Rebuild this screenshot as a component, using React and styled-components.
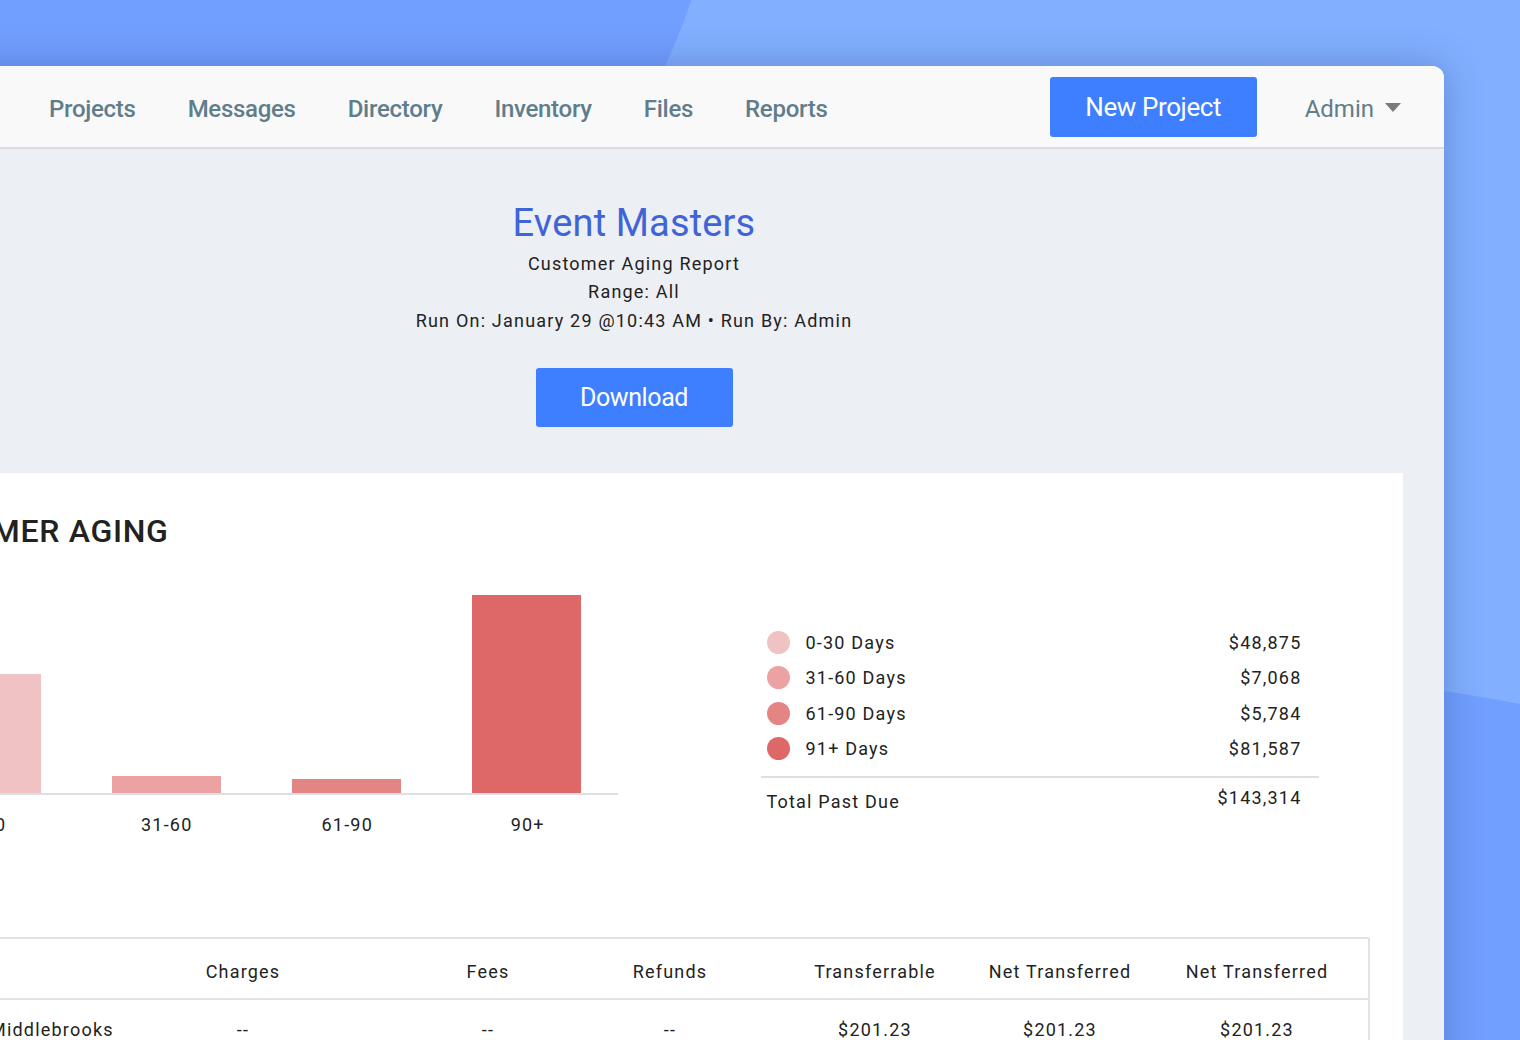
import React from "react";
import styled, { createGlobalStyle } from "styled-components";

const GlobalStyle = createGlobalStyle`
  html, body {
    margin: 0;
    padding: 0;
    background: #719fff;
  }
  * {
    box-sizing: border-box;
  }
`;

const Page = styled.div`
  position: relative;
  width: 1520px;
  height: 1040px;
  overflow: hidden;
  display: flex;
  justify-content: flex-end;
  padding: 66px 76px 0 0;
  background: #719fff;
  font-family: Roboto, "Liberation Sans", sans-serif;
`;

const Backdrop = styled.svg`
  position: absolute;
  top: 0;
  left: 0;
`;

const Window = styled.div`
  position: relative;
  flex: 0 0 1620px;
  height: 1100px;
  background: #eceff4;
  border-radius: 12px 12px 0 0;
  box-shadow: 0 0 36px rgba(45, 75, 140, 0.38);
`;

const NavBar = styled.nav`
  height: 83px;
  display: flex;
  align-items: center;
  padding: 0 43px 0 225px;
  background: #f9f9f9;
  border-bottom: 2px solid #dcdcdc;
  border-radius: 12px 12px 0 0;
`;

const NavLinks = styled.div`
  display: flex;
  gap: 52px;
  margin-top: 5px;
`;

const NavLink = styled.a`
  font-size: 24px;
  font-weight: 500;
  letter-spacing: -0.28px;
  color: #607d8b;
`;

const PrimaryButton = styled.button`
  width: ${(p) => p.$width}px;
  height: ${(p) => p.$height}px;
  border: none;
  border-radius: 3px;
  background: #3d7fff;
  color: #fff;
  font-family: inherit;
  font-size: ${(p) => p.$size}px;
  font-weight: 400;
  letter-spacing: -0.4px;
`;

const NavRight = styled.div`
  margin-left: auto;
  display: flex;
  align-items: center;
  gap: 48px;
`;

const AdminMenu = styled.div`
  display: flex;
  align-items: center;
  gap: 11px;
  font-size: 24px;
  color: #607d8b;
  padding-top: 4px;
`;

const Caret = styled.span`
  width: 0;
  height: 0;
  margin-top: -3px;
  border-left: 8px solid transparent;
  border-right: 8px solid transparent;
  border-top: 9px solid #7a7a7a;
`;

const Hero = styled.header`
  height: 324px;
  padding-top: 50px;
  display: flex;
  flex-direction: column;
  align-items: center;
`;

const CompanyName = styled.h1`
  margin: 0 0 2.5px;
  font-size: 38px;
  line-height: 48px;
  font-weight: 400;
  letter-spacing: 0.15px;
  color: #3f64d8;
`;

const HeroLine = styled.div`
  font-size: 18px;
  line-height: 28.5px;
  letter-spacing: 1.2px;
  color: #222;
`;

const DownloadWrap = styled.div`
  margin-top: 32.5px;
`;

const Card = styled.section`
  margin: 0 41px;
  height: 700px;
  background: #fff;
  padding: 36px 33px 0 21px;
`;

const CardTitle = styled.h2`
  margin: 0;
  font-size: 32px;
  line-height: 44px;
  font-weight: 500;
  letter-spacing: 0.7px;
  color: #222;
  text-transform: uppercase;
`;

const ChartRow = styled.div`
  display: flex;
  margin-top: 41px;
  height: 343px;
`;

const Chart = styled.div`
  flex: 0 0 722px;
  margin-left: 10px;
  display: flex;
  flex-direction: column;
`;

const Bars = styled.div`
  height: 201px;
  display: grid;
  grid-template-columns: repeat(4, 180px);
  border-bottom: 2px solid #dcdfe4;
`;

const BarSlot = styled.div`
  display: flex;
  align-items: flex-end;
  justify-content: center;
`;

const Bar = styled.div`
  width: 109px;
  height: ${(p) => p.$height}px;
  background: ${(p) => p.$color};
`;

const BarLabels = styled.div`
  display: grid;
  grid-template-columns: repeat(4, 1fr);
  margin-top: 18px;
  text-align: center;
  font-size: 18px;
  line-height: 24px;
  letter-spacing: 1.2px;
  color: #222;
`;

const Legend = styled.div`
  width: 558px;
  margin-left: 142.5px;
  padding-top: 30.5px;
`;

const LegendList = styled.div`
  padding: 0 17px 9.5px 6px;
  border-bottom: 2px solid #dedede;
`;

const LegendRow = styled.div`
  display: flex;
  align-items: center;
  height: 35.5px;
  font-size: 18px;
  letter-spacing: 1.2px;
  color: #222;
`;

const Dot = styled.span`
  width: 23px;
  height: 23px;
  margin-right: 16px;
  border-radius: 50%;
  background: ${(p) => p.$color};
`;

const Amount = styled.span`
  margin-left: auto;
`;

const TotalRow = styled.div`
  display: flex;
  align-items: flex-start;
  padding: 8px 17px 0 6px;
  font-size: 18px;
  line-height: 24px;
  letter-spacing: 1.2px;
  color: #222;
`;

const TotalLabel = styled.span`
  margin-top: 4px;
`;

const TableBox = styled.div`
  margin-left: 13px;
  border: 2px solid #e2e2e2;
  border-radius: 2px;
`;

const TableRow = styled.div`
  display: grid;
  grid-template-columns: 152px 380px 110px 254px 156px 214px 180px;
  align-items: center;
  height: ${(p) => p.$height}px;
  padding-top: ${(p) => (p.$head ? 5 : 0)}px;
  font-size: 18px;
  letter-spacing: 1.2px;
  color: #222;
  border-bottom: ${(p) => (p.$head ? "2px solid #e2e2e2" : "none")};
`;

const Cell = styled.div`
  text-align: center;
  white-space: nowrap;
`;

const NameCell = styled.div`
  padding-left: 89px;
  white-space: nowrap;
`;

const legend = [
  { label: "0-30 Days", amount: "$48,875", color: "#f0c2c3" },
  { label: "31-60 Days", amount: "$7,068", color: "#eca2a3" },
  { label: "61-90 Days", amount: "$5,784", color: "#e38585" },
  { label: "91+ Days", amount: "$81,587", color: "#de6767" },
];

const bars = [
  { label: "0-30", height: 119, color: "#f0c2c3" },
  { label: "31-60", height: 17, color: "#eca2a3" },
  { label: "61-90", height: 14, color: "#e38585" },
  { label: "90+", height: 198, color: "#de6767" },
];

const navItems = ["Projects", "Messages", "Directory", "Inventory", "Files", "Reports"];
const columns = ["Charges", "Fees", "Refunds", "Transferrable", "Net Transferred", "Net Transferred"];
const values = ["--", "--", "--", "$201.23", "$201.23", "$201.23"];

export default function App() {
  return (
    <Page>
      <GlobalStyle />
      <Backdrop width="1520" height="1040" viewBox="0 0 1520 1040">
        <path
          d="M691 0 C 683 26 674 46 665 66 L 600 260 L 1000 560 C 1200 660 1360 678 1444 691 C 1470 695 1495 699 1520 704 L 1520 0 Z"
          fill="#82afff"
        />
      </Backdrop>
      <Window>
        <NavBar>
          <NavLinks>
            {navItems.map((item) => (
              <NavLink key={item}>{item}</NavLink>
            ))}
          </NavLinks>
          <NavRight>
            <PrimaryButton $width={207} $height={60} $size={26}>New Project</PrimaryButton>
            <AdminMenu>
              Admin
              <Caret />
            </AdminMenu>
          </NavRight>
        </NavBar>
        <Hero>
          <CompanyName>Event Masters</CompanyName>
          <HeroLine>Customer Aging Report</HeroLine>
          <HeroLine>Range: All</HeroLine>
          <HeroLine>Run On: January 29 @10:43 AM • Run By: Admin</HeroLine>
          <DownloadWrap>
            <PrimaryButton $width={197} $height={59} $size={25}>Download</PrimaryButton>
          </DownloadWrap>
        </Hero>
        <Card>
          <CardTitle>Customer Aging</CardTitle>
          <ChartRow>
            <Chart>
              <Bars>
                {bars.map((bar) => (
                  <BarSlot key={bar.label}>
                    <Bar $height={bar.height} $color={bar.color} />
                  </BarSlot>
                ))}
              </Bars>
              <BarLabels>
                {bars.map((bar) => (
                  <div key={bar.label}>{bar.label}</div>
                ))}
              </BarLabels>
            </Chart>
            <Legend>
              <LegendList>
                {legend.map((row) => (
                  <LegendRow key={row.label}>
                    <Dot $color={row.color} />
                    {row.label}
                    <Amount>{row.amount}</Amount>
                  </LegendRow>
                ))}
              </LegendList>
              <TotalRow>
                <TotalLabel>Total Past Due</TotalLabel>
                <Amount>$143,314</Amount>
              </TotalRow>
            </Legend>
          </ChartRow>
          <TableBox>
            <TableRow $head $height={61}>
              <div />
              {columns.map((col, i) => (
                <Cell key={i}>{col}</Cell>
              ))}
            </TableRow>
            <TableRow $height={58}>
              <NameCell>Middlebrooks</NameCell>
              {values.map((value, i) => (
                <Cell key={i}>{value}</Cell>
              ))}
            </TableRow>
          </TableBox>
        </Card>
      </Window>
    </Page>
  );
}
